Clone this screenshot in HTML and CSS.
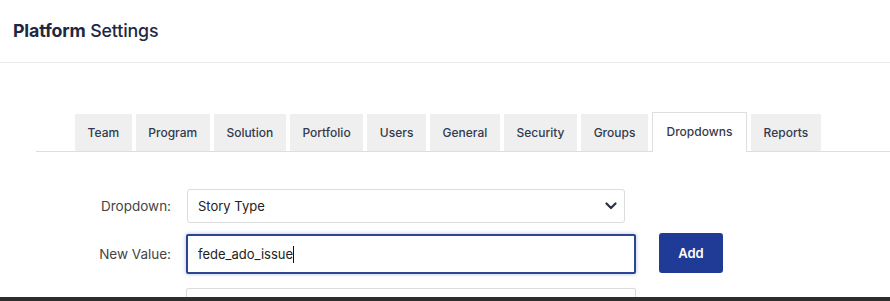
FILE: index.html
```html
<!DOCTYPE html>
<html lang="en">
<head>
  <meta charset="UTF-8">
  <title>Platform Settings</title>
  <link rel="stylesheet" href="styles.css">
</head>
<body>

<div class="page">
  <!-- Шапка -->
  <div class="header">
    <h1><b>Platform</b> Settings</h1>
  </div>

  <!-- Вкладки -->
  <div class="tabs">
    <div class="tab">Team</div>
    <div class="tab">Program</div>
    <div class="tab">Solution</div>
    <div class="tab">Portfolio</div>
    <div class="tab">Users</div>
    <div class="tab">General</div>
    <div class="tab">Security</div>
    <div class="tab">Groups</div>
    <div class="tab active">Dropdowns</div>
    <div class="tab">Reports</div>
  </div>

  <!-- Форма -->
  <div class="form">
    <div class="row">
      <label>Dropdown:</label>
      <div class="select">
        <span>Story Type</span>
        <svg width="12" height="8" viewBox="0 0 12 8"><path d="M1.5 1.5 L6 6 L10.5 1.5" fill="none" stroke="#2a3140" stroke-width="2.2" stroke-linecap="round" stroke-linejoin="round"/></svg>
      </div>
    </div>
    <div class="row">
      <label>New Value:</label>
      <div class="input focused"><span class="caret">fede_ado_issue</span></div>
      <button class="btn">Add</button>
    </div>
    <div class="row">
      <label></label>
      <div class="input list"></div>
    </div>
  </div>
</div>
<div class="bottom-bar"></div>

</body>
</html>
```

FILE: styles.css
```css
body {
  margin: 0;
  font-family: Inter, "Noto Sans", sans-serif;
  background: #ffffff;
  color: #222;
}
.page {
  height: 297px;
  overflow: hidden;
}
.header {
  height: 63px;
  border-bottom: 1px solid #e9e9e9;
  padding: 0 13px;
  display: flex;
  align-items: center;
  box-sizing: border-box;
}
.header h1 {
  margin: -2px 0 0 0;
  font-size: 17.8px;
  font-weight: 500;
  color: #1e2843;
  letter-spacing: -0.15px;
}
.header h1 b {
  font-weight: 700;
}
.tabs {
  display: flex;
  gap: 4px;
  margin: 49px 0 0 36px;
  padding-left: 39px;
  border-bottom: 1px solid #dedede;
  align-items: flex-end;
}
.tab {
  height: 37px;
  line-height: 38px;
  padding: 0 12.6px;
  background: #efefef;
  font-size: 12px;
  font-weight: 500;
  color: #333a4d;
}
.tab.active {
  background: #ffffff;
  border: 1px solid #dedede;
  border-bottom: none;
  height: 38px;
  margin-bottom: -1px;
  padding: 0 13.6px 1px 13.6px;
}
.form {
  margin-top: 37px;
}
.row {
  display: flex;
  align-items: center;
  margin-bottom: 11px;
}
.row label {
  flex: 0 0 187px;
  text-align: right;
  padding-right: 16px;
  box-sizing: border-box;
  font-size: 13.5px;
  color: #444;
}
.select {
  width: 438px;
  height: 34px;
  border: 1px solid #dcdcdc;
  border-radius: 3px;
  box-sizing: border-box;
  display: flex;
  align-items: center;
  justify-content: space-between;
  padding: 0 7px 0 10px;
  font-size: 13px;
  color: #222;
}
.input {
  width: 450px;
  height: 40px;
  border: 1px solid #dcdcdc;
  border-radius: 2px;
  box-sizing: border-box;
  display: flex;
  align-items: center;
  padding: 0 11px;
  font-size: 13px;
  color: #222;
}
.input.focused {
  margin-left: -1px;
  border: 2px solid #2b4596;
  box-shadow: 0 0 4px rgba(43, 69, 150, 0.35);
  padding: 0 10px;
}
.caret {
  border-right: 1px solid #111;
  line-height: 17px;
}
.input.list {
  margin-left: -1px;
  margin-top: 3px;
}
.btn {
  margin-left: 23px;
  width: 64px;
  height: 40px;
  border: none;
  border-radius: 3px;
  background: #1f3b96;
  color: #fff;
  font-family: Inter, "Noto Sans", sans-serif;
  font-size: 13px;
  font-weight: 600;
  margin-top: -2px;
}
.bottom-bar {
  height: 4px;
  background: #2e2e2e;
}
```
